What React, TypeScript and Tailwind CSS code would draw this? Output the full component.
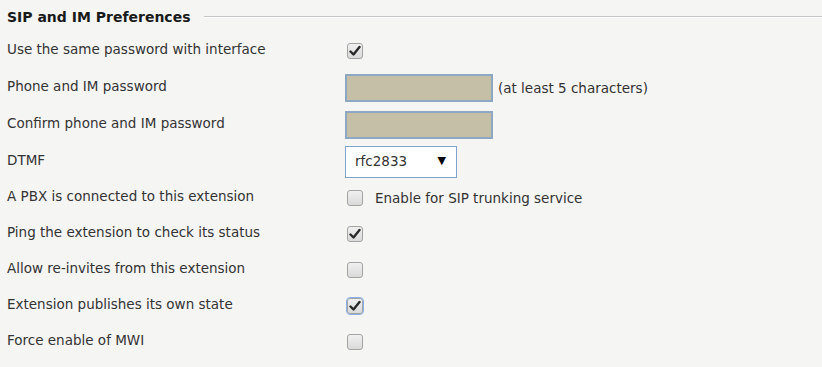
import React from "react";

const font = { fontFamily: '"DejaVu Sans", Verdana, sans-serif' };

function Check({ checked, focus }: { checked?: boolean; focus?: boolean }) {
  return (
    <div
      className={`w-[16px] h-[16px] rounded-[3px] border border-[#a3a3a3] bg-gradient-to-b from-[#f0f0f0] to-[#dadada] flex items-center justify-center ${
        focus ? "outline outline-1 outline-[#8ab0e6]" : ""
      }`}
    >
      {checked && (
        <svg width="12" height="12" viewBox="0 0 12 12">
          <path d="M1.5 6.5 L4.5 9.5 L10.5 2" stroke="#2a2a2a" strokeWidth="2.4" fill="none" strokeLinecap="round" strokeLinejoin="round" />
        </svg>
      )}
    </div>
  );
}

function Row({ label, h, children }: { label: string; h: string; children?: React.ReactNode }) {
  return (
    <div className={`flex items-center ${h}`}>
      <div className="w-[338px] shrink-0 pt-[1px]">{label}</div>
      <div className="flex items-center mt-[4px]">{children}</div>
    </div>
  );
}

function PwInput() {
  return <div className="w-[148px] h-[28px] bg-[#c4bfa6] border-2 border-[#8ea8c4]" />;
}

export default function App() {
  return (
    <div className="w-[822px] h-[367px] bg-[#f5f5f3] text-[#333] text-[13.5px] pl-[7px]" style={font}>
      <div className="flex items-center h-[31px] pt-[3px]">
        <div className="font-bold text-[14px] text-[#1a1a1a] whitespace-nowrap">SIP and IM Preferences</div>
        <div className="flex-1 ml-[13px] border-t border-[#c6c6c6] border-b border-b-white" />
      </div>
      <Row label="Use the same password with interface" h="h-[36px]">
        <div className="ml-[2px]"><Check checked /></div>
      </Row>
      <Row label="Phone and IM password" h="h-[38px]">
        <PwInput />
        <span className="ml-[5px]">(at least 5 characters)</span>
      </Row>
      <Row label="Confirm phone and IM password" h="h-[36px]">
        <PwInput />
      </Row>
      <Row label="DTMF" h="h-[37px]">
        <div className="w-[112px] h-[32px] bg-white border border-[#7fa3cc] flex items-center justify-between pl-[9px] pr-[10px]">
          <span>rfc2833</span>
          <span className="text-[11px] text-black">▼</span>
        </div>
      </Row>
      <Row label="A PBX is connected to this extension" h="h-[36px]">
        <div className="ml-[2px]"><Check /></div>
        <span className="ml-[12px]">Enable for SIP trunking service</span>
      </Row>
      <Row label="Ping the extension to check its status" h="h-[36px]">
        <div className="ml-[2px]"><Check checked /></div>
      </Row>
      <Row label="Allow re-invites from this extension" h="h-[36px]">
        <div className="ml-[2px]"><Check /></div>
      </Row>
      <Row label="Extension publishes its own state" h="h-[36px]">
        <div className="ml-[2px]"><Check checked focus /></div>
      </Row>
      <Row label="Force enable of MWI" h="h-[36px]">
        <div className="ml-[2px]"><Check /></div>
      </Row>
    </div>
  );
}
